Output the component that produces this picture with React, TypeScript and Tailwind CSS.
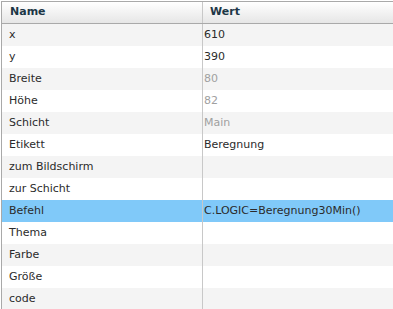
import React from "react";

interface Row {
  name: string;
  value: string;
  disabled?: boolean;
}

const rows: Row[] = [
  { name: "x", value: "610" },
  { name: "y", value: "390" },
  { name: "Breite", value: "80", disabled: true },
  { name: "Höhe", value: "82", disabled: true },
  { name: "Schicht", value: "Main", disabled: true },
  { name: "Etikett", value: "Beregnung" },
  { name: "zum Bildschirm", value: "" },
  { name: "zur Schicht", value: "" },
  { name: "Befehl", value: "C.LOGIC=Beregnung30Min()" },
  { name: "Thema", value: "" },
  { name: "Farbe", value: "" },
  { name: "Größe", value: "" },
  { name: "code", value: "" },
];

const selected = 8;

const App: React.FC = () => {
  return (
    <div
      className="w-[393px] h-[309px] overflow-hidden bg-white text-[11px] text-[#2b2b2b]"
      style={{ fontFamily: '"DejaVu Sans", Verdana, sans-serif' }}
    >
      <div className="mt-px ml-px border-t border-l border-[#a9a9a9]">
        <div className="grid grid-cols-[200px_1fr] h-[22px] border-b border-[#a9a9a9] bg-gradient-to-b from-white to-[#e6e6e6]">
          <div className="flex items-center pl-[8px] font-bold text-[#1d3746]">Name</div>
          <div className="flex items-center pl-[7px] border-l border-[#c8c8c8] font-bold text-[#1d3746]">
            Wert
          </div>
        </div>
        {rows.map((row, i) => {
          const bg =
            i === selected ? "bg-[#80c9f9]" : i % 2 === 0 ? "bg-[#f4f4f4]" : "bg-white";
          return (
            <div key={i} className={`grid grid-cols-[200px_1fr] h-[22px] ${bg}`}>
              <div className="flex items-center pl-[7px]">{row.name}</div>
              <div
                className={`flex items-center pl-px border-l border-[#c8c8c8] ${
                  row.disabled ? "text-[#a0a0a0]" : ""
                }`}
              >
                {row.value}
              </div>
            </div>
          );
        })}
      </div>
    </div>
  );
};

export default App;
